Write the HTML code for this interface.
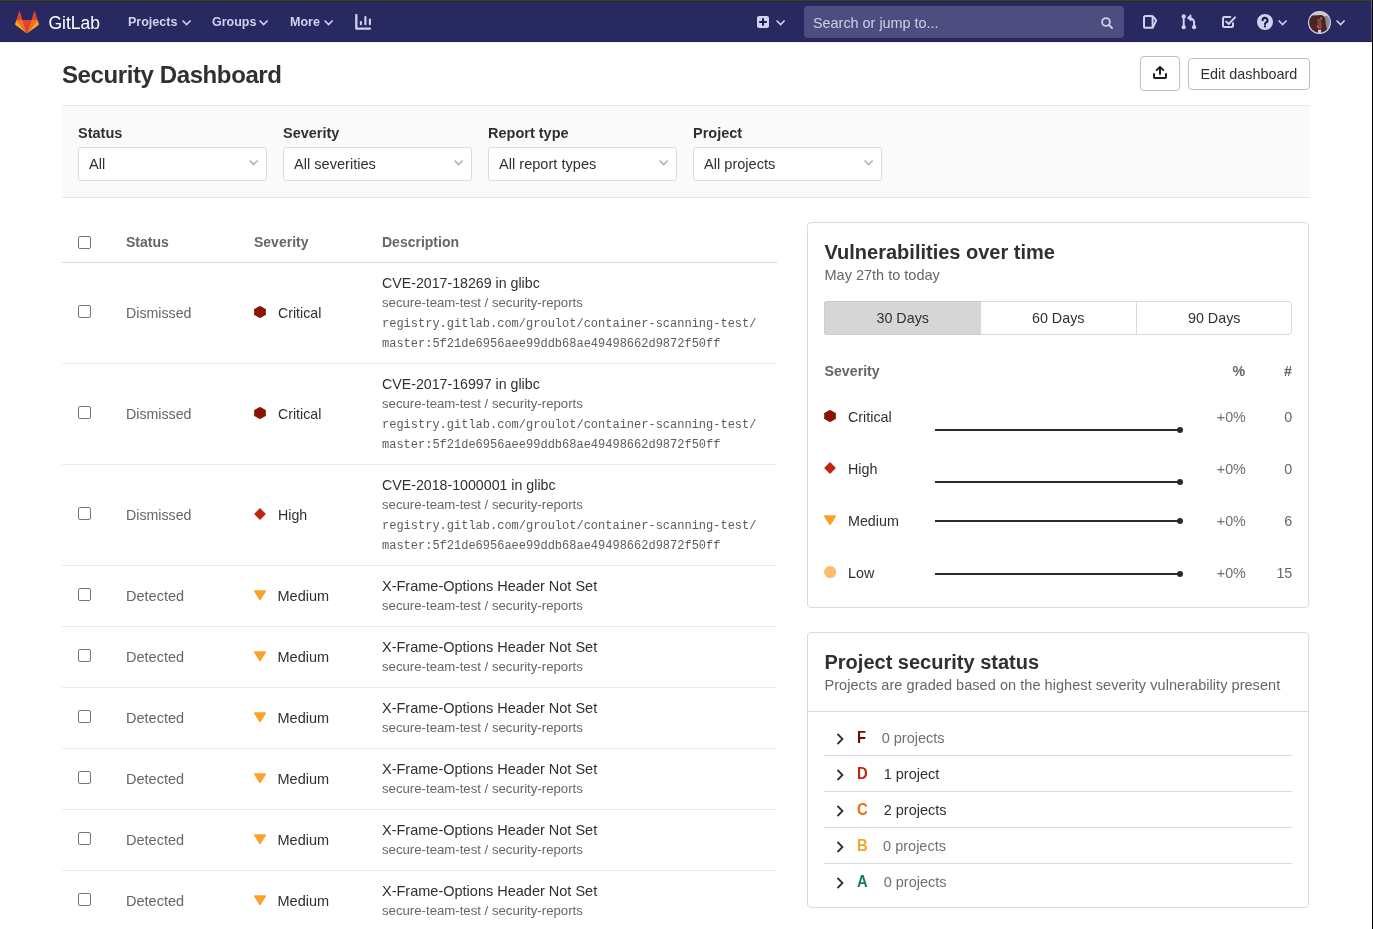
<!DOCTYPE html>
<html><head><meta charset="utf-8">
<style>
*{box-sizing:border-box;margin:0;padding:0}
html,body{width:1373px;height:929px;overflow:hidden;background:#fff;font-family:"Liberation Sans",sans-serif;color:#303030}
body{position:relative;will-change:transform}
.a{position:absolute}
.t{position:absolute;white-space:nowrap}
</style></head><body>

<div class="a" style="left:0px;top:0px;width:1373px;height:1px;background:#3a3a3a"></div>
<div class="a" style="left:0px;top:1px;width:1373px;height:1px;background:#282828"></div>
<div class="a" style="left:0px;top:2px;width:1373px;height:39px;background:#292961"></div>
<div class="a" style="left:0px;top:41px;width:1373px;height:1px;background:#1f1f56"></div>
<div class="a" style="left:0px;top:42px;width:1373px;height:1px;background:#f4f4f2"></div>
<svg class="a" style="left:15px;top:11px" width="24" height="23" viewBox="0 0 24 23">
<path d="M12 22.6 L16.4 8.9 H7.6 Z" fill="#e24329"/>
<path d="M12 22.6 L7.6 8.9 H1.4 Z" fill="#fc6d26"/>
<path d="M1.4 8.9 L0.1 13 a0.9 0.9 0 0 0 .3 1 L12 22.6 Z" fill="#fca326"/>
<path d="M1.4 8.9 H7.6 L4.9 0.6 a.45 .45 0 0 0 -.9 0 Z" fill="#e24329"/>
<path d="M12 22.6 L16.4 8.9 H22.6 Z" fill="#fc6d26"/>
<path d="M22.6 8.9 L23.9 13 a0.9 0.9 0 0 1 -.3 1 L12 22.6 Z" fill="#fca326"/>
<path d="M22.6 8.9 H16.4 L19.1 0.6 a.45 .45 0 0 1 .9 0 Z" fill="#e24329"/>
</svg>
<div class="t" style="left:48.5px;top:14.62px;font-size:17.5px;line-height:17.5px;color:#fff;">GitLab</div>
<div class="t" style="left:128px;top:15.88px;font-size:12.5px;line-height:12.5px;color:#d1d1f0;font-weight:700;">Projects</div>
<svg class="a" style="left:182px;top:19px" width="10" height="7" viewBox="0 0 10 7"><path d="M0.6 1.5 L4.6 5.5 L8.6 1.5" fill="none" stroke="#d1d1f0" stroke-width="1.6"/></svg>
<div class="t" style="left:212px;top:15.88px;font-size:12.5px;line-height:12.5px;color:#d1d1f0;font-weight:700;">Groups</div>
<svg class="a" style="left:259px;top:19px" width="10" height="7" viewBox="0 0 10 7"><path d="M0.6 1.5 L4.6 5.5 L8.6 1.5" fill="none" stroke="#d1d1f0" stroke-width="1.6"/></svg>
<div class="t" style="left:290px;top:15.88px;font-size:12.5px;line-height:12.5px;color:#d1d1f0;font-weight:700;">More</div>
<svg class="a" style="left:324px;top:19px" width="10" height="7" viewBox="0 0 10 7"><path d="M0.6 1.5 L4.6 5.5 L8.6 1.5" fill="none" stroke="#d1d1f0" stroke-width="1.6"/></svg>
<svg class="a" style="left:355px;top:14px" width="17" height="17" viewBox="0 0 17 17"><path d="M1.3 1.1 V14.3 Q1.3 14.7 1.7 14.7 H14.9" fill="none" stroke="#d1d1f0" stroke-width="2.3" stroke-linecap="round"/><path d="M5.9 8 V10.2 M10.4 3.1 V10.2 M14.9 5.5 V10.2" stroke="#d1d1f0" stroke-width="2.1" stroke-linecap="round"/></svg>
<svg class="a" style="left:757px;top:16px" width="12" height="12" viewBox="0 0 12 12"><rect x="0" y="0" width="12" height="12" rx="2" fill="#d1d1f0"/><path d="M6 2.2 V9.8 M2.2 6 H9.8" stroke="#1c1c50" stroke-width="2"/></svg>
<svg class="a" style="left:776px;top:19px" width="10" height="7" viewBox="0 0 10 7"><path d="M0.6 1.5 L4.6 5.5 L8.6 1.5" fill="none" stroke="#d1d1f0" stroke-width="1.6"/></svg>
<div class="a" style="left:804px;top:6px;width:320px;height:32px;background:#4d4d7f;border-radius:4px"></div>
<div class="t" style="left:813px;top:16.06px;font-size:14.4px;line-height:14.4px;color:#cfcfea;">Search or jump to...</div>
<svg class="a" style="left:1101px;top:17px" width="12" height="12" viewBox="0 0 12 12"><circle cx="5" cy="5" r="3.9" fill="none" stroke="#d1d1f0" stroke-width="1.8"/><path d="M8 8 L11 11" stroke="#d1d1f0" stroke-width="1.8" stroke-linecap="round"/></svg>
<svg class="a" style="left:1142px;top:14px" width="16" height="16" viewBox="0 0 16 16"><rect x="2" y="2" width="8.6" height="11.8" rx="1.6" fill="none" stroke="#d1d1f0" stroke-width="2"/><path d="M10.6 2.2 L14.2 6.4 L10.8 13.6" fill="none" stroke="#d1d1f0" stroke-width="2" stroke-linejoin="round" stroke-linecap="round"/></svg>
<svg class="a" style="left:1181px;top:14px" width="16" height="16" viewBox="0 0 16 16"><path d="M2.7 2.4 V13.2 M13.1 13.2 V8.6 Q13.1 5 9.4 4.4" fill="none" stroke="#d1d1f0" stroke-width="2" stroke-linecap="round"/><path d="M9.9 0.6 L6.3 3.9 L10.2 6.9 Z" fill="#d1d1f0" stroke="#d1d1f0" stroke-width="0.8" stroke-linejoin="round"/><circle cx="2.7" cy="2.4" r="2.1" fill="#d1d1f0"/><circle cx="2.7" cy="13.2" r="2.1" fill="#d1d1f0"/><circle cx="13.1" cy="13.2" r="2.1" fill="#d1d1f0"/></svg>
<svg class="a" style="left:1221px;top:15px" width="16" height="14" viewBox="0 0 16 14"><path d="M9.3 2 H3.2 Q2 2 2 3.2 V10.8 Q2 12 3.2 12 H10.8 Q12 12 12 10.8 V8.2" fill="none" stroke="#d1d1f0" stroke-width="2" stroke-linecap="round"/><path d="M5.2 6.6 L7.7 9 L14 2.4" fill="none" stroke="#d1d1f0" stroke-width="2" stroke-linecap="round" stroke-linejoin="round"/></svg>
<svg class="a" style="left:1257px;top:14px" width="16" height="16" viewBox="0 0 16 16"><circle cx="8" cy="8" r="8" fill="#d1d1f0"/><path d="M5.6 6.3 A2.45 2.45 0 1 1 8.9 8.6 Q8 9.1 8 10.1" fill="none" stroke="#1c1c50" stroke-width="2.1" stroke-linecap="round"/><circle cx="8" cy="12.4" r="1.15" fill="#1c1c50"/></svg>
<svg class="a" style="left:1278px;top:19px" width="10" height="7" viewBox="0 0 10 7"><path d="M0.6 1.5 L4.6 5.5 L8.6 1.5" fill="none" stroke="#d1d1f0" stroke-width="1.6"/></svg>
<svg class="a" style="left:1308px;top:11px" width="23" height="23" viewBox="0 0 23 23"><defs><clipPath id="av"><circle cx="11.5" cy="11.5" r="11"/></clipPath></defs><g clip-path="url(#av)"><rect width="23" height="23" fill="#8c8c8c"/><rect width="23" height="5" fill="#c9c9c9"/><path d="M0 6 L4 4.5 L14 4 L17 7 L18 14 L20 23 L0 23 Z" fill="#4a2420"/><path d="M9 8 L13 8 L14 14 L13 23 L10 23 L10 16 Z" fill="#6b4a48"/><circle cx="13" cy="7.5" r="1.2" fill="#e04030"/><circle cx="10" cy="15.5" r="1.5" fill="#d03a2a"/><rect x="10" y="19" width="3" height="4" fill="#cfcfcf"/></g><circle cx="11.5" cy="11.5" r="11" fill="none" stroke="#c8c8ee" stroke-width="1.2"/></svg>
<svg class="a" style="left:1336px;top:19px" width="10" height="7" viewBox="0 0 10 7"><path d="M0.6 1.5 L4.6 5.5 L8.6 1.5" fill="none" stroke="#d1d1f0" stroke-width="1.6"/></svg>
<div class="a" style="left:1372px;top:0px;width:1px;height:929px;background:#000"></div>
<div class="a" style="left:1371px;top:2px;width:1px;height:39px;background:#56568a"></div>
<div class="a" style="left:1371px;top:0px;width:1px;height:2px;background:#6a6a6a"></div>
<div class="t" style="left:62px;top:62.60px;font-size:24px;line-height:24px;color:#303030;font-weight:700;letter-spacing:-0.4px;">Security Dashboard</div>
<div class="a" style="left:1140px;top:56px;width:40px;height:35px;border:1px solid #bfbfbf;border-radius:4px;background:#fff"></div>
<svg class="a" style="left:1153px;top:66px" width="14" height="13" viewBox="0 0 14 13"><path d="M7 8.1 V1 M3.7 4.1 L7 0.9 L10.3 4.1" fill="none" stroke="#1f1f1f" stroke-width="2" stroke-linecap="round" stroke-linejoin="round"/><path d="M1 7.9 V10.4 Q1 12 2.6 12 H11.4 Q13 12 13 10.4 V7.9" fill="none" stroke="#1f1f1f" stroke-width="2" stroke-linecap="round"/></svg>
<div class="a" style="left:1188px;top:58px;width:122px;height:32px;border:1px solid #bfbfbf;border-radius:4px;background:#fff"></div>
<div class="t" style="left:1200.5px;top:66.76px;font-size:14.4px;line-height:14.4px;color:#303030;">Edit dashboard</div>
<div class="a" style="left:62px;top:105px;width:1248px;height:93px;background:#fafafa;border-top:1px solid #e5e5e5;border-bottom:1px solid #e5e5e5"></div>
<div class="t" style="left:78px;top:125.87px;font-size:14.5px;line-height:14.5px;color:#303030;font-weight:700;">Status</div>
<div class="a" style="left:78px;top:147px;width:189px;height:34px;background:#fff;border:1px solid #dcdcdc;border-radius:3px"></div>
<div class="t" style="left:89px;top:156.59px;font-size:14.6px;line-height:14.6px;color:#303030;">All</div>
<svg class="a" style="left:249px;top:158.9px" width="10" height="7" viewBox="0 0 10 7"><path d="M0.6 1.5 L4.6 5.5 L8.6 1.5" fill="none" stroke="#b0b0b0" stroke-width="1.6"/></svg>
<div class="t" style="left:283px;top:125.87px;font-size:14.5px;line-height:14.5px;color:#303030;font-weight:700;">Severity</div>
<div class="a" style="left:283px;top:147px;width:189px;height:34px;background:#fff;border:1px solid #dcdcdc;border-radius:3px"></div>
<div class="t" style="left:294px;top:156.59px;font-size:14.6px;line-height:14.6px;color:#303030;">All severities</div>
<svg class="a" style="left:454px;top:158.9px" width="10" height="7" viewBox="0 0 10 7"><path d="M0.6 1.5 L4.6 5.5 L8.6 1.5" fill="none" stroke="#b0b0b0" stroke-width="1.6"/></svg>
<div class="t" style="left:488px;top:125.87px;font-size:14.5px;line-height:14.5px;color:#303030;font-weight:700;">Report type</div>
<div class="a" style="left:488px;top:147px;width:189px;height:34px;background:#fff;border:1px solid #dcdcdc;border-radius:3px"></div>
<div class="t" style="left:499px;top:156.59px;font-size:14.6px;line-height:14.6px;color:#303030;">All report types</div>
<svg class="a" style="left:659px;top:158.9px" width="10" height="7" viewBox="0 0 10 7"><path d="M0.6 1.5 L4.6 5.5 L8.6 1.5" fill="none" stroke="#b0b0b0" stroke-width="1.6"/></svg>
<div class="t" style="left:693px;top:125.87px;font-size:14.5px;line-height:14.5px;color:#303030;font-weight:700;">Project</div>
<div class="a" style="left:693px;top:147px;width:189px;height:34px;background:#fff;border:1px solid #dcdcdc;border-radius:3px"></div>
<div class="t" style="left:704px;top:156.59px;font-size:14.6px;line-height:14.6px;color:#303030;">All projects</div>
<svg class="a" style="left:864px;top:158.9px" width="10" height="7" viewBox="0 0 10 7"><path d="M0.6 1.5 L4.6 5.5 L8.6 1.5" fill="none" stroke="#b0b0b0" stroke-width="1.6"/></svg>
<div class="a" style="left:78px;top:236px;width:13px;height:13px;border:1px solid #767676;border-radius:2px;background:#fff"></div>
<div class="t" style="left:126px;top:235.30px;font-size:14px;line-height:14px;color:#666;font-weight:700;">Status</div>
<div class="t" style="left:254px;top:235.30px;font-size:14px;line-height:14px;color:#666;font-weight:700;">Severity</div>
<div class="t" style="left:382px;top:235.30px;font-size:14px;line-height:14px;color:#666;font-weight:700;">Description</div>
<div class="a" style="left:62px;top:262px;width:715px;height:1px;background:#dbdbdb"></div>
<div class="a" style="left:78px;top:305px;width:13px;height:13px;border:1px solid #767676;border-radius:2px;background:#fff"></div>
<div class="t" style="left:126px;top:305.93px;font-size:14.2px;line-height:14.2px;color:#666;">Dismissed</div>
<svg class="a" style="left:254px;top:306px" width="12" height="12" viewBox="0 0 12 12"><path d="M6 0.1 L11.8 3.3 V8.7 L6 11.9 L0.2 8.7 V3.3 Z" fill="#8d1300" stroke="#8d1300" stroke-width="0.4" stroke-linejoin="round"/></svg>
<div class="t" style="left:278px;top:305.93px;font-size:14.2px;line-height:14.2px;color:#303030;">Critical</div>
<div class="t" style="left:382px;top:275.93px;font-size:14.2px;line-height:14.2px;color:#303030;">CVE-2017-18269 in glibc</div>
<div class="t" style="left:382px;top:295.78px;font-size:13.2px;line-height:13.2px;color:#666;">secure-team-test / security-reports</div>
<div class="t" style="left:382px;top:318.08px;font-size:12px;line-height:12px;color:#5c5c5c;font-family:'Liberation Mono',monospace;">registry.gitlab.com/groulot/container-scanning-test/</div>
<div class="t" style="left:382px;top:337.88px;font-size:12px;line-height:12px;color:#5c5c5c;font-family:'Liberation Mono',monospace;">master:5f21de6956aee99ddb68ae49498662d9872f50ff</div>
<div class="a" style="left:62px;top:363px;width:715px;height:1px;background:#ececec"></div>
<div class="a" style="left:78px;top:406px;width:13px;height:13px;border:1px solid #767676;border-radius:2px;background:#fff"></div>
<div class="t" style="left:126px;top:406.93px;font-size:14.2px;line-height:14.2px;color:#666;">Dismissed</div>
<svg class="a" style="left:254px;top:407px" width="12" height="12" viewBox="0 0 12 12"><path d="M6 0.1 L11.8 3.3 V8.7 L6 11.9 L0.2 8.7 V3.3 Z" fill="#8d1300" stroke="#8d1300" stroke-width="0.4" stroke-linejoin="round"/></svg>
<div class="t" style="left:278px;top:406.93px;font-size:14.2px;line-height:14.2px;color:#303030;">Critical</div>
<div class="t" style="left:382px;top:376.93px;font-size:14.2px;line-height:14.2px;color:#303030;">CVE-2017-16997 in glibc</div>
<div class="t" style="left:382px;top:396.78px;font-size:13.2px;line-height:13.2px;color:#666;">secure-team-test / security-reports</div>
<div class="t" style="left:382px;top:419.08px;font-size:12px;line-height:12px;color:#5c5c5c;font-family:'Liberation Mono',monospace;">registry.gitlab.com/groulot/container-scanning-test/</div>
<div class="t" style="left:382px;top:438.88px;font-size:12px;line-height:12px;color:#5c5c5c;font-family:'Liberation Mono',monospace;">master:5f21de6956aee99ddb68ae49498662d9872f50ff</div>
<div class="a" style="left:62px;top:464px;width:715px;height:1px;background:#ececec"></div>
<div class="a" style="left:78px;top:507px;width:13px;height:13px;border:1px solid #767676;border-radius:2px;background:#fff"></div>
<div class="t" style="left:126px;top:507.93px;font-size:14.2px;line-height:14.2px;color:#666;">Dismissed</div>
<svg class="a" style="left:254px;top:508px" width="12" height="12" viewBox="0 0 12 12"><path d="M6 0.1 L11.9 6 L6 11.9 L0.1 6 Z" fill="#c0240f"/></svg>
<div class="t" style="left:278px;top:507.93px;font-size:14.2px;line-height:14.2px;color:#303030;">High</div>
<div class="t" style="left:382px;top:477.93px;font-size:14.2px;line-height:14.2px;color:#303030;">CVE-2018-1000001 in glibc</div>
<div class="t" style="left:382px;top:497.78px;font-size:13.2px;line-height:13.2px;color:#666;">secure-team-test / security-reports</div>
<div class="t" style="left:382px;top:520.08px;font-size:12px;line-height:12px;color:#5c5c5c;font-family:'Liberation Mono',monospace;">registry.gitlab.com/groulot/container-scanning-test/</div>
<div class="t" style="left:382px;top:539.88px;font-size:12px;line-height:12px;color:#5c5c5c;font-family:'Liberation Mono',monospace;">master:5f21de6956aee99ddb68ae49498662d9872f50ff</div>
<div class="a" style="left:62px;top:565px;width:715px;height:1px;background:#ececec"></div>
<div class="a" style="left:78px;top:588px;width:13px;height:13px;border:1px solid #767676;border-radius:2px;background:#fff"></div>
<div class="t" style="left:126px;top:589.47px;font-size:14.5px;line-height:14.5px;color:#666;">Detected</div>
<svg class="a" style="left:254px;top:590px" width="13" height="11" viewBox="0 0 13 11"><path d="M0.9 1.1 H11.2 L6.05 9.4 Z" fill="#fca22c" stroke="#fca22c" stroke-width="1.8" stroke-linejoin="round"/></svg>
<div class="t" style="left:277.5px;top:589.47px;font-size:14.5px;line-height:14.5px;color:#303030;">Medium</div>
<div class="t" style="left:382px;top:578.67px;font-size:14.5px;line-height:14.5px;color:#303030;">X-Frame-Options Header Not Set</div>
<div class="t" style="left:382px;top:598.78px;font-size:13.2px;line-height:13.2px;color:#666;">secure-team-test / security-reports</div>
<div class="a" style="left:62px;top:626px;width:715px;height:1px;background:#ececec"></div>
<div class="a" style="left:78px;top:649px;width:13px;height:13px;border:1px solid #767676;border-radius:2px;background:#fff"></div>
<div class="t" style="left:126px;top:650.47px;font-size:14.5px;line-height:14.5px;color:#666;">Detected</div>
<svg class="a" style="left:254px;top:651px" width="13" height="11" viewBox="0 0 13 11"><path d="M0.9 1.1 H11.2 L6.05 9.4 Z" fill="#fca22c" stroke="#fca22c" stroke-width="1.8" stroke-linejoin="round"/></svg>
<div class="t" style="left:277.5px;top:650.47px;font-size:14.5px;line-height:14.5px;color:#303030;">Medium</div>
<div class="t" style="left:382px;top:639.67px;font-size:14.5px;line-height:14.5px;color:#303030;">X-Frame-Options Header Not Set</div>
<div class="t" style="left:382px;top:659.78px;font-size:13.2px;line-height:13.2px;color:#666;">secure-team-test / security-reports</div>
<div class="a" style="left:62px;top:687px;width:715px;height:1px;background:#ececec"></div>
<div class="a" style="left:78px;top:710px;width:13px;height:13px;border:1px solid #767676;border-radius:2px;background:#fff"></div>
<div class="t" style="left:126px;top:711.47px;font-size:14.5px;line-height:14.5px;color:#666;">Detected</div>
<svg class="a" style="left:254px;top:712px" width="13" height="11" viewBox="0 0 13 11"><path d="M0.9 1.1 H11.2 L6.05 9.4 Z" fill="#fca22c" stroke="#fca22c" stroke-width="1.8" stroke-linejoin="round"/></svg>
<div class="t" style="left:277.5px;top:711.47px;font-size:14.5px;line-height:14.5px;color:#303030;">Medium</div>
<div class="t" style="left:382px;top:700.67px;font-size:14.5px;line-height:14.5px;color:#303030;">X-Frame-Options Header Not Set</div>
<div class="t" style="left:382px;top:720.78px;font-size:13.2px;line-height:13.2px;color:#666;">secure-team-test / security-reports</div>
<div class="a" style="left:62px;top:748px;width:715px;height:1px;background:#ececec"></div>
<div class="a" style="left:78px;top:771px;width:13px;height:13px;border:1px solid #767676;border-radius:2px;background:#fff"></div>
<div class="t" style="left:126px;top:772.47px;font-size:14.5px;line-height:14.5px;color:#666;">Detected</div>
<svg class="a" style="left:254px;top:773px" width="13" height="11" viewBox="0 0 13 11"><path d="M0.9 1.1 H11.2 L6.05 9.4 Z" fill="#fca22c" stroke="#fca22c" stroke-width="1.8" stroke-linejoin="round"/></svg>
<div class="t" style="left:277.5px;top:772.47px;font-size:14.5px;line-height:14.5px;color:#303030;">Medium</div>
<div class="t" style="left:382px;top:761.67px;font-size:14.5px;line-height:14.5px;color:#303030;">X-Frame-Options Header Not Set</div>
<div class="t" style="left:382px;top:781.78px;font-size:13.2px;line-height:13.2px;color:#666;">secure-team-test / security-reports</div>
<div class="a" style="left:62px;top:809px;width:715px;height:1px;background:#ececec"></div>
<div class="a" style="left:78px;top:832px;width:13px;height:13px;border:1px solid #767676;border-radius:2px;background:#fff"></div>
<div class="t" style="left:126px;top:833.47px;font-size:14.5px;line-height:14.5px;color:#666;">Detected</div>
<svg class="a" style="left:254px;top:834px" width="13" height="11" viewBox="0 0 13 11"><path d="M0.9 1.1 H11.2 L6.05 9.4 Z" fill="#fca22c" stroke="#fca22c" stroke-width="1.8" stroke-linejoin="round"/></svg>
<div class="t" style="left:277.5px;top:833.47px;font-size:14.5px;line-height:14.5px;color:#303030;">Medium</div>
<div class="t" style="left:382px;top:822.67px;font-size:14.5px;line-height:14.5px;color:#303030;">X-Frame-Options Header Not Set</div>
<div class="t" style="left:382px;top:842.78px;font-size:13.2px;line-height:13.2px;color:#666;">secure-team-test / security-reports</div>
<div class="a" style="left:62px;top:870px;width:715px;height:1px;background:#ececec"></div>
<div class="a" style="left:78px;top:893px;width:13px;height:13px;border:1px solid #767676;border-radius:2px;background:#fff"></div>
<div class="t" style="left:126px;top:894.47px;font-size:14.5px;line-height:14.5px;color:#666;">Detected</div>
<svg class="a" style="left:254px;top:895px" width="13" height="11" viewBox="0 0 13 11"><path d="M0.9 1.1 H11.2 L6.05 9.4 Z" fill="#fca22c" stroke="#fca22c" stroke-width="1.8" stroke-linejoin="round"/></svg>
<div class="t" style="left:277.5px;top:894.47px;font-size:14.5px;line-height:14.5px;color:#303030;">Medium</div>
<div class="t" style="left:382px;top:883.67px;font-size:14.5px;line-height:14.5px;color:#303030;">X-Frame-Options Header Not Set</div>
<div class="t" style="left:382px;top:903.78px;font-size:13.2px;line-height:13.2px;color:#666;">secure-team-test / security-reports</div>
<div class="a" style="left:62px;top:931px;width:715px;height:1px;background:#ececec"></div>
<div class="a" style="left:807px;top:222px;width:502px;height:386px;border:1px solid #dbdbdb;border-radius:4px;background:#fff"></div>
<div class="t" style="left:824.5px;top:241.70px;font-size:20px;line-height:20px;color:#303030;font-weight:700;">Vulnerabilities over time</div>
<div class="t" style="left:824.5px;top:268.48px;font-size:14.5px;line-height:14.5px;color:#666;">May 27th to today</div>
<div class="a" style="left:824px;top:301px;width:468px;height:34px;border:1px solid #dbdbdb;border-radius:4px;background:#fff;overflow:hidden"></div>
<div class="a" style="left:824px;top:301px;width:157px;height:34px;background:#d6d6d6;border:1px solid #cdcdcd;border-right:0;border-radius:3px 0 0 3px"></div>
<div class="a" style="left:1136px;top:302px;width:1px;height:32px;background:#dbdbdb"></div>
<div class="t" style="left:876.5px;top:310.64px;font-size:14.3px;line-height:14.3px;color:#303030;">30 Days</div>
<div class="t" style="left:1032px;top:310.64px;font-size:14.3px;line-height:14.3px;color:#303030;">60 Days</div>
<div class="t" style="left:1188px;top:310.64px;font-size:14.3px;line-height:14.3px;color:#303030;">90 Days</div>
<div class="t" style="left:824.5px;top:364.03px;font-size:14.2px;line-height:14.2px;color:#666;font-weight:700;">Severity</div>
<div class="t" style="left:1232.5px;top:364.03px;font-size:14.2px;line-height:14.2px;color:#666;font-weight:700;">%</div>
<div class="t" style="left:1284px;top:364.03px;font-size:14.2px;line-height:14.2px;color:#666;font-weight:700;">#</div>
<svg class="a" style="left:824px;top:410px" width="12" height="12" viewBox="0 0 12 12"><path d="M6 0.1 L11.8 3.3 V8.7 L6 11.9 L0.2 8.7 V3.3 Z" fill="#8d1300" stroke="#8d1300" stroke-width="0.4" stroke-linejoin="round"/></svg>
<div class="t" style="left:848px;top:409.85px;font-size:14.3px;line-height:14.3px;color:#303030;">Critical</div>
<div class="a" style="left:935px;top:429px;width:245px;height:2px;background:#2a2a2a"></div>
<div class="a" style="left:1177px;top:427px;width:6px;height:6px;background:#2a2a2a;border-radius:50%"></div>
<div class="t" style="left:1216.8px;top:409.85px;font-size:14.3px;line-height:14.3px;color:#707070;">+0%</div>
<div class="t" style="left:1190px;width:102.3px;text-align:right;top:409.85px;font-size:14.3px;line-height:14.3px;color:#666">0</div>
<svg class="a" style="left:824px;top:462px" width="12" height="12" viewBox="0 0 12 12"><path d="M6 0.1 L11.9 6 L6 11.9 L0.1 6 Z" fill="#c0240f"/></svg>
<div class="t" style="left:848px;top:461.85px;font-size:14.3px;line-height:14.3px;color:#303030;">High</div>
<div class="a" style="left:935px;top:481px;width:245px;height:2px;background:#2a2a2a"></div>
<div class="a" style="left:1177px;top:479px;width:6px;height:6px;background:#2a2a2a;border-radius:50%"></div>
<div class="t" style="left:1216.8px;top:461.85px;font-size:14.3px;line-height:14.3px;color:#707070;">+0%</div>
<div class="t" style="left:1190px;width:102.3px;text-align:right;top:461.85px;font-size:14.3px;line-height:14.3px;color:#666">0</div>
<svg class="a" style="left:824px;top:514.7px" width="13" height="11" viewBox="0 0 13 11"><path d="M0.9 1.1 H11.2 L6.05 9.4 Z" fill="#fca22c" stroke="#fca22c" stroke-width="1.8" stroke-linejoin="round"/></svg>
<div class="t" style="left:848px;top:513.85px;font-size:14.3px;line-height:14.3px;color:#303030;">Medium</div>
<div class="a" style="left:935px;top:520px;width:245px;height:2px;background:#2a2a2a"></div>
<div class="a" style="left:1177px;top:518px;width:6px;height:6px;background:#2a2a2a;border-radius:50%"></div>
<div class="t" style="left:1216.8px;top:513.85px;font-size:14.3px;line-height:14.3px;color:#707070;">+0%</div>
<div class="t" style="left:1190px;width:102.3px;text-align:right;top:513.85px;font-size:14.3px;line-height:14.3px;color:#666">6</div>
<svg class="a" style="left:824px;top:566px" width="12" height="12" viewBox="0 0 12 12"><defs><pattern id="hp" width="2.6" height="2.6" patternUnits="userSpaceOnUse" patternTransform="rotate(45)"><rect width="2.6" height="2.6" fill="#fcb35e"/><rect width="1" height="2.6" fill="#fdc88a"/></pattern></defs><circle cx="6.15" cy="6.1" r="6.1" fill="url(#hp)"/></svg>
<div class="t" style="left:848px;top:565.85px;font-size:14.3px;line-height:14.3px;color:#303030;">Low</div>
<div class="a" style="left:935px;top:573px;width:245px;height:2px;background:#2a2a2a"></div>
<div class="a" style="left:1177px;top:571px;width:6px;height:6px;background:#2a2a2a;border-radius:50%"></div>
<div class="t" style="left:1216.8px;top:565.85px;font-size:14.3px;line-height:14.3px;color:#707070;">+0%</div>
<div class="t" style="left:1190px;width:102.3px;text-align:right;top:565.85px;font-size:14.3px;line-height:14.3px;color:#666">15</div>
<div class="a" style="left:807px;top:632px;width:502px;height:276px;border:1px solid #dbdbdb;border-radius:4px;background:#fff"></div>
<div class="t" style="left:824.5px;top:651.70px;font-size:20px;line-height:20px;color:#303030;font-weight:700;">Project security status</div>
<div class="t" style="left:824.5px;top:677.67px;font-size:14.5px;line-height:14.5px;color:#666;letter-spacing:0.05px;">Projects are graded based on the highest severity vulnerability present</div>
<div class="a" style="left:808px;top:711px;width:500px;height:1px;background:#dbdbdb"></div>
<svg class="a" style="left:836px;top:732.5px" width="9" height="12" viewBox="0 0 9 12"><path d="M1.5 1 L6.5 6 L1.5 11" fill="none" stroke="#303030" stroke-width="1.8"/></svg>
<div class="t" style="left:856.5px;top:728.55px;font-size:17px;line-height:17px;color:#6e0f00;font-weight:700;transform:scaleX(0.87);transform-origin:0 0;">F</div>
<div class="t" style="left:881.7px;top:730.67px;font-size:14.5px;line-height:14.5px;color:#707070;">0 projects</div>
<div class="a" style="left:824px;top:755px;width:468px;height:1px;background:#dbdbdb"></div>
<svg class="a" style="left:836px;top:768.5px" width="9" height="12" viewBox="0 0 9 12"><path d="M1.5 1 L6.5 6 L1.5 11" fill="none" stroke="#303030" stroke-width="1.8"/></svg>
<div class="t" style="left:856.5px;top:764.55px;font-size:17px;line-height:17px;color:#c0260f;font-weight:700;transform:scaleX(0.87);transform-origin:0 0;">D</div>
<div class="t" style="left:883.7px;top:766.67px;font-size:14.5px;line-height:14.5px;color:#303030;">1 project</div>
<div class="a" style="left:824px;top:791px;width:468px;height:1px;background:#dbdbdb"></div>
<svg class="a" style="left:836px;top:804.5px" width="9" height="12" viewBox="0 0 9 12"><path d="M1.5 1 L6.5 6 L1.5 11" fill="none" stroke="#303030" stroke-width="1.8"/></svg>
<div class="t" style="left:856.5px;top:800.55px;font-size:17px;line-height:17px;color:#f26d10;font-weight:700;transform:scaleX(0.87);transform-origin:0 0;">C</div>
<div class="t" style="left:883.7px;top:802.67px;font-size:14.5px;line-height:14.5px;color:#303030;">2 projects</div>
<div class="a" style="left:824px;top:827px;width:468px;height:1px;background:#dbdbdb"></div>
<svg class="a" style="left:836px;top:840.5px" width="9" height="12" viewBox="0 0 9 12"><path d="M1.5 1 L6.5 6 L1.5 11" fill="none" stroke="#303030" stroke-width="1.8"/></svg>
<div class="t" style="left:856.5px;top:836.55px;font-size:17px;line-height:17px;color:#f5a623;font-weight:700;transform:scaleX(0.87);transform-origin:0 0;">B</div>
<div class="t" style="left:883.1px;top:838.67px;font-size:14.5px;line-height:14.5px;color:#707070;">0 projects</div>
<div class="a" style="left:824px;top:863px;width:468px;height:1px;background:#dbdbdb"></div>
<svg class="a" style="left:836px;top:876.5px" width="9" height="12" viewBox="0 0 9 12"><path d="M1.5 1 L6.5 6 L1.5 11" fill="none" stroke="#303030" stroke-width="1.8"/></svg>
<div class="t" style="left:856.5px;top:872.55px;font-size:17px;line-height:17px;color:#108548;font-weight:700;transform:scaleX(0.87);transform-origin:0 0;">A</div>
<div class="t" style="left:883.7px;top:874.67px;font-size:14.5px;line-height:14.5px;color:#707070;">0 projects</div>
</body></html>
